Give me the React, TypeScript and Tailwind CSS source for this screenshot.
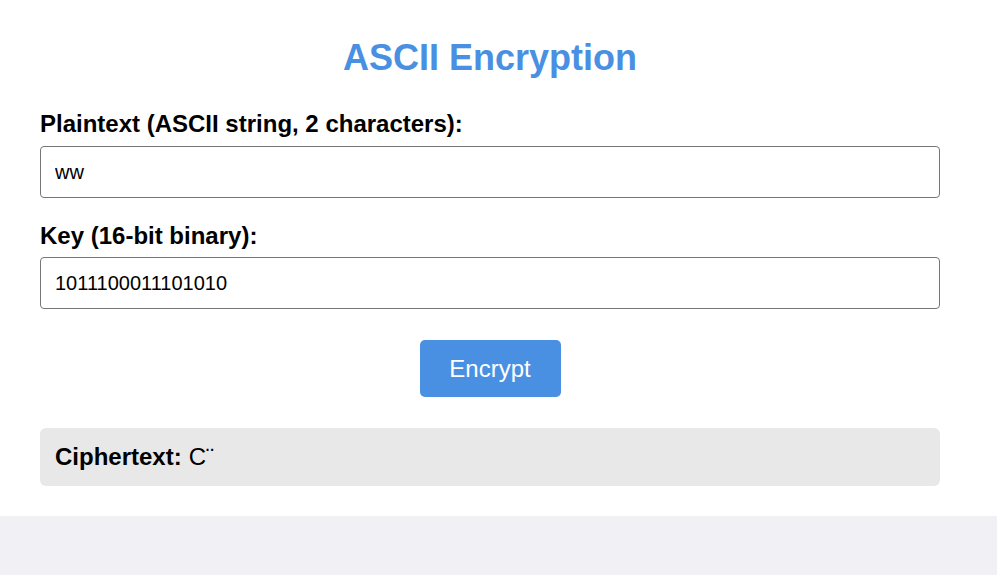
import React, { useState } from 'react';

const App: React.FC = () => {
  const [plaintext, setPlaintext] = useState('ww');
  const [key, setKey] = useState('1011100011101010');

  return (
    <div
      className="min-h-screen bg-[#f0f0f5] text-black"
      style={{ fontFamily: '"Liberation Sans", Arial, sans-serif' }}
    >
      <div className="bg-white pt-[38px] pb-[30px] pl-[40px]">
        <div className="w-[900px] flex flex-col">
          <h1 className="text-center text-[36px] leading-[40px] font-bold text-[#4a90e2] mb-[33px]">
            ASCII Encryption
          </h1>

          <label className="text-[24px] leading-[26px] font-bold mb-[9px]">
            Plaintext (ASCII string, 2 characters):
          </label>
          <input
            value={plaintext}
            onChange={(e) => setPlaintext(e.target.value)}
            className="h-[52px] w-full border border-[#767676] rounded-[4px] px-[14px] text-[20px] outline-none mb-[25px]"
          />

          <label className="text-[24px] leading-[26px] font-bold mb-[8px]">
            Key (16-bit binary):
          </label>
          <input
            value={key}
            onChange={(e) => setKey(e.target.value)}
            className="h-[52px] w-full border border-[#767676] rounded-[4px] px-[14px] text-[20px] outline-none"
          />

          <div className="flex justify-center mt-[31px]">
            <button className="h-[57px] w-[141px] bg-[#4a90e2] text-white text-[24px] rounded-[5px]">
              Encrypt
            </button>
          </div>

          <div className="mt-[31px] h-[58px] bg-[#e8e8e8] rounded-[6px] px-[15px] flex items-center text-[24px]">
            <span className="font-bold">Ciphertext:</span>
            <span className="ml-[7px]">C¨</span>
          </div>
        </div>
      </div>
    </div>
  );
};

export default App;
